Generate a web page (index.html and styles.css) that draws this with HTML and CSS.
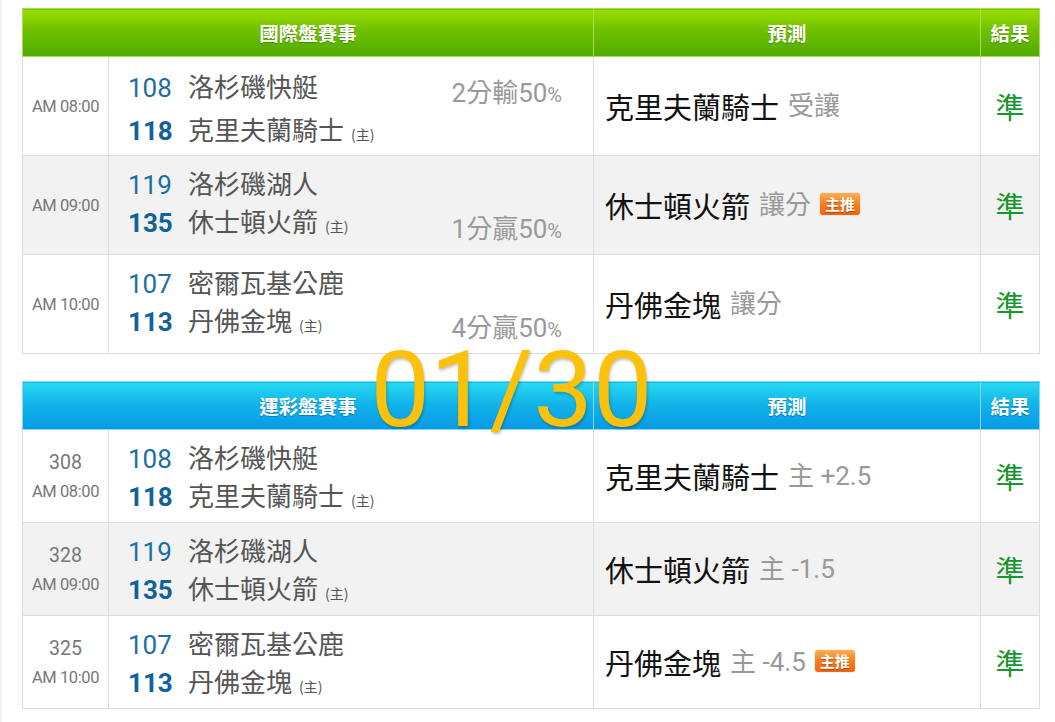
FILE: index.html
```html
<!DOCTYPE html>
<html lang="zh-Hant">
<head>
<meta charset="utf-8">
<link rel="stylesheet" href="styles.css">
</head>
<body>
<div class="page">
  <table class="board board-intl">
    <colgroup><col class="c-time"><col class="c-team"><col class="c-pred"><col class="c-res"></colgroup>
    <thead>
      <tr><th colspan="2">國際盤賽事</th><th>預測</th><th>結果</th></tr>
    </thead>
    <tbody>
      <tr class="row-a">
        <td class="time"><div class="clock">AM 08:00</div></td>
        <td class="teams">
          <div class="team-wrap">
            <div class="lines wide">
              <div class="line"><span class="num">108</span><span class="name">洛杉磯快艇</span></div>
              <div class="line"><span class="num strong">118</span><span class="name">克里夫蘭騎士</span><span class="home">(主)</span></div>
            </div>
            <div class="score top">2分輸50<span class="pct">%</span></div>
          </div>
        </td>
        <td class="pred"><span class="pick">克里夫蘭騎士</span><span class="hint">受讓</span></td>
        <td class="res">準</td>
      </tr>
      <tr class="row-b">
        <td class="time"><div class="clock">AM 09:00</div></td>
        <td class="teams">
          <div class="team-wrap">
            <div class="lines raised">
              <div class="line"><span class="num">119</span><span class="name">洛杉磯湖人</span></div>
              <div class="line"><span class="num strong">135</span><span class="name">休士頓火箭</span><span class="home">(主)</span></div>
            </div>
            <div class="score bottom">1分贏50<span class="pct">%</span></div>
          </div>
        </td>
        <td class="pred"><span class="pick">休士頓火箭</span><span class="hint">讓分</span><span class="badge">主推</span></td>
        <td class="res">準</td>
      </tr>
      <tr class="row-a">
        <td class="time"><div class="clock">AM 10:00</div></td>
        <td class="teams">
          <div class="team-wrap">
            <div class="lines raised">
              <div class="line"><span class="num">107</span><span class="name">密爾瓦基公鹿</span></div>
              <div class="line"><span class="num strong">113</span><span class="name">丹佛金塊</span><span class="home">(主)</span></div>
            </div>
            <div class="score bottom">4分贏50<span class="pct">%</span></div>
          </div>
        </td>
        <td class="pred"><span class="pick">丹佛金塊</span><span class="hint">讓分</span></td>
        <td class="res">準</td>
      </tr>
    </tbody>
  </table>

  <table class="board board-lottery">
    <colgroup><col class="c-time"><col class="c-team"><col class="c-pred"><col class="c-res"></colgroup>
    <thead>
      <tr><th colspan="2">運彩盤賽事</th><th>預測</th><th>結果</th></tr>
    </thead>
    <tbody>
      <tr class="row-a">
        <td class="time"><div class="code">308</div><div class="clock">AM 08:00</div></td>
        <td class="teams">
          <div class="lines">
            <div class="line"><span class="num">108</span><span class="name">洛杉磯快艇</span></div>
            <div class="line"><span class="num strong">118</span><span class="name">克里夫蘭騎士</span><span class="home">(主)</span></div>
          </div>
        </td>
        <td class="pred"><span class="pick">克里夫蘭騎士</span><span class="hint">主 +2.5</span></td>
        <td class="res">準</td>
      </tr>
      <tr class="row-b">
        <td class="time"><div class="code">328</div><div class="clock">AM 09:00</div></td>
        <td class="teams">
          <div class="lines">
            <div class="line"><span class="num">119</span><span class="name">洛杉磯湖人</span></div>
            <div class="line"><span class="num strong">135</span><span class="name">休士頓火箭</span><span class="home">(主)</span></div>
          </div>
        </td>
        <td class="pred"><span class="pick">休士頓火箭</span><span class="hint">主 -1.5</span></td>
        <td class="res">準</td>
      </tr>
      <tr class="row-a">
        <td class="time"><div class="code">325</div><div class="clock">AM 10:00</div></td>
        <td class="teams">
          <div class="lines">
            <div class="line"><span class="num">107</span><span class="name">密爾瓦基公鹿</span></div>
            <div class="line"><span class="num strong">113</span><span class="name">丹佛金塊</span><span class="home">(主)</span></div>
          </div>
        </td>
        <td class="pred"><span class="pick">丹佛金塊</span><span class="hint">主 -4.5</span><span class="badge">主推</span></td>
        <td class="res">準</td>
      </tr>
    </tbody>
  </table>

  <div class="date-stamp">01/30</div>
</div>
</body>
</html>
```

FILE: styles.css
```css
html, body {
  margin: 0;
  padding: 0;
  background: #ffffff;
}
body {
  font-family: Roboto, "Noto Sans CJK TC", sans-serif;
  color: #555;
}
.page {
  position: relative;
  width: 1055px;
  height: 722px;
  overflow: hidden;
  padding: 8px 0 0 22px;
  box-sizing: border-box;
  display: flex;
  flex-direction: column;
  gap: 27px;
  box-shadow: inset 2px 0 0 #f3f3f3;
}
.board {
  width: 1017px;
  border-collapse: collapse;
  table-layout: fixed;
}
.c-time { width: 86px; }
.c-team { width: 485px; }
.c-pred { width: 387px; }
.c-res { width: 59px; }

.board th {
  height: 47px;
  padding: 0;
  color: #fff;
  font-family: "Noto Sans CJK TC", sans-serif;
  font-weight: 700;
  font-size: 19.5px;
  text-shadow: 0 1px 1px rgba(0,0,0,0.25);
  text-align: center;
}
.board-intl th {
  background: linear-gradient(#9ade00 0%, #6fc000 45%, #50ab00 100%);
  border: 1px solid #a6de5c;
}
.board-lottery th {
  background: linear-gradient(#26daf0 0%, #12b4ea 45%, #089ae4 100%);
  border: 1px solid #84d8f4;
}
.board td {
  border: 1px solid #dedede;
  padding: 0;
  vertical-align: middle;
}
.row-a td { background: #ffffff; }
.row-b td { background: #f2f2f2; }
.board-intl tbody tr { height: 99px; }
.board-lottery tbody tr { height: 93px; }

.time {
  text-align: center;
  color: #777;
}
.clock {
  font-size: 16.5px;
  letter-spacing: -0.4px;
}
.code {
  font-size: 19.5px;
  margin-bottom: 8px;
}

.teams { padding-left: 19px !important; }
.team-wrap {
  display: flex;
  justify-content: space-between;
  height: 97px;
}
.lines {
  display: flex;
  flex-direction: column;
  justify-content: center;
}
.lines.wide { gap: 5px; padding-top: 2px; }
.lines.raised { padding-bottom: 6px; }
.line {
  display: flex;
  align-items: baseline;
  height: 38px;
  line-height: 38px;
}
.num {
  width: 60px;
  font-size: 26px;
  color: #1b6ea3;
}
.num.strong {
  font-weight: 700;
  color: #11629a;
}
.name {
  font-family: "Noto Sans CJK TC", sans-serif;
  font-size: 26px;
  color: #555;
}
.home {
  font-family: "Noto Sans CJK TC", sans-serif;
  font-size: 14px;
  color: #555;
  margin-left: 7px;
}
.score {
  font-size: 26px;
  line-height: 28px;
  color: #999;
  padding-right: 31px;
  font-family: Roboto, "Noto Sans CJK TC", sans-serif;
}
.score .pct { font-size: 20px; }
.score.top { align-self: flex-start; margin-top: 21px; }
.score.bottom { align-self: flex-end; margin-bottom: 9px; }

.pred {
  padding-left: 11px !important;
  white-space: nowrap;
}
.pick {
  font-family: "Noto Sans CJK TC", sans-serif;
  font-size: 29px;
  color: #111;
  vertical-align: middle;
}
.hint {
  font-family: Roboto, "Noto Sans CJK TC", sans-serif;
  font-size: 26px;
  color: #999;
  margin-left: 9px;
  vertical-align: middle;
  position: relative;
  top: -3px;
}
.badge {
  display: inline-block;
  vertical-align: middle;
  position: relative;
  top: -1px;
  margin-left: 9px;
  width: 40px;
  height: 22px;
  line-height: 22px;
  text-align: center;
  font-family: "Noto Sans CJK TC", sans-serif;
  font-size: 15px;
  font-weight: 700;
  color: #fff;
  text-shadow: 0 1px 1px rgba(120,40,0,0.6);
  border-radius: 3px;
  background: linear-gradient(#ffae55 0%, #f7801f 50%, #ee6410 100%);
  box-shadow: 0 0 1px rgba(200,90,0,0.8);
}
.res {
  text-align: center;
  font-family: "Noto Sans CJK TC", sans-serif;
  font-size: 29px;
  color: #17962d;
}

.date-stamp {
  position: absolute;
  left: 0;
  right: 0;
  top: 351px;
  text-align: center;
  padding-right: 32px;
  font-family: Roboto, sans-serif;
  font-weight: 400;
  font-size: 106px;
  line-height: 78px;
  color: #fcc10a;
  text-shadow: 1px 2px 3px rgba(0,0,0,0.25);
  pointer-events: none;
}
```
